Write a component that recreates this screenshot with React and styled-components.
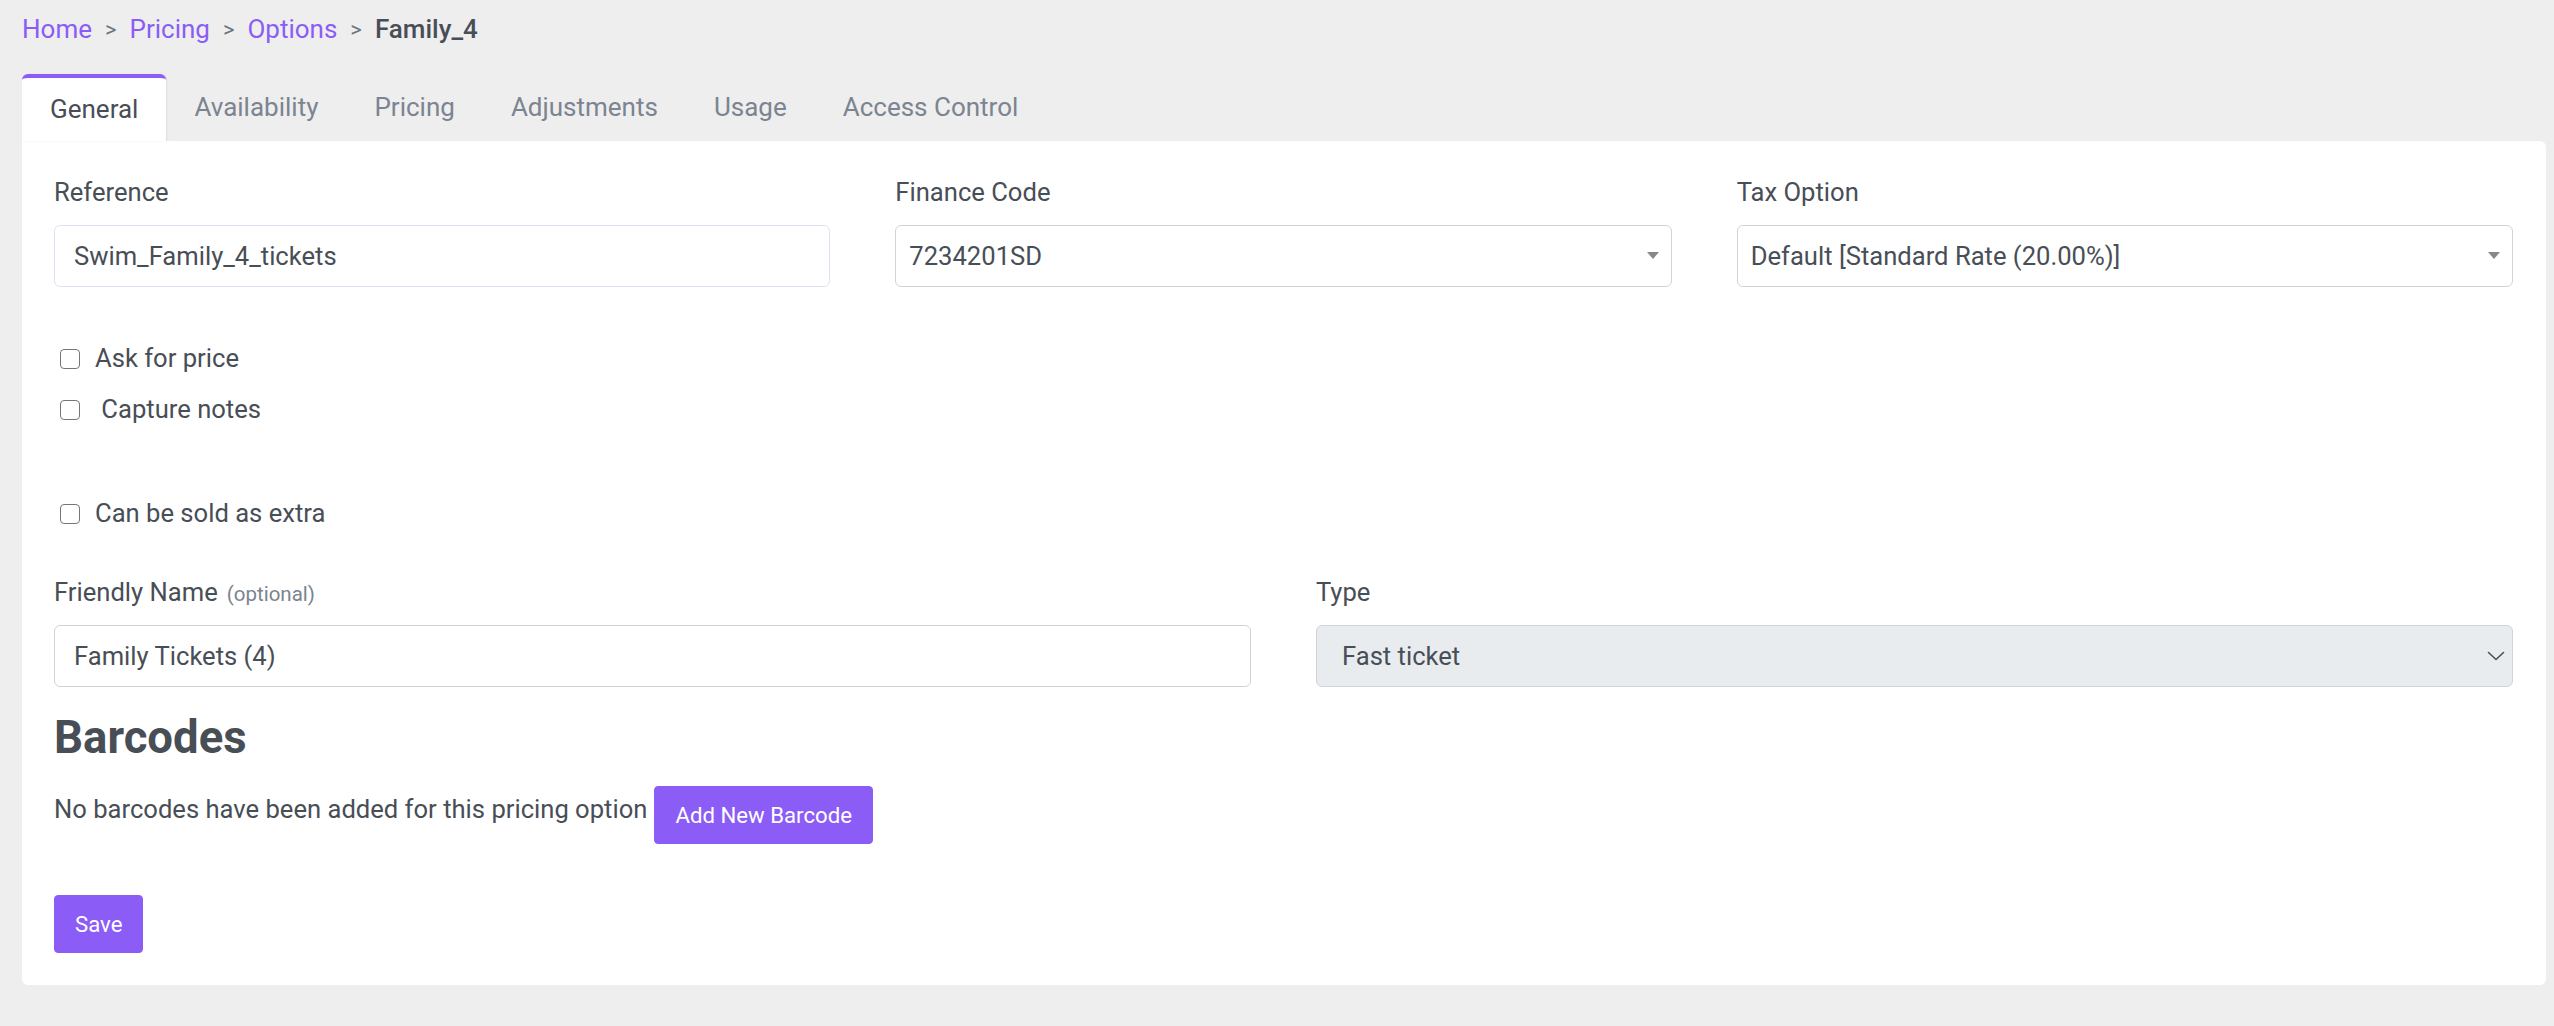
import React from "react";
import styled, { createGlobalStyle } from "styled-components";

const GlobalStyle = createGlobalStyle`
  html, body {
    margin: 0;
    padding: 0;
    background: #eeeeee;
  }
  body {
    font-family: Roboto, "Liberation Sans", Arial, sans-serif;
    font-size: 25.6px;
    line-height: 1.5;
    color: #495057;
  }
  * { box-sizing: border-box; }
`;

const Page = styled.div`
  padding: 10px 8px 41px 22px;
  min-height: 1026px;
`;

const Breadcrumb = styled.nav`
  display: flex;
  align-items: center;
  height: 39px;
  margin-bottom: 25px;
  font-size: 26px;
`;

const Crumb = styled.a`
  color: ${(p) => (p.$current ? "#484e56" : "#8b5cf6")};
  font-weight: ${(p) => (p.$current ? 500 : 400)};
  text-decoration: none;
`;

const Sep = styled.span`
  color: #6c757d;
  padding: 0 13px;
  font-size: 22px;
`;

const Tabs = styled.div`
  display: flex;
  align-items: stretch;
  height: 67px;
  font-size: 26px;
`;

const Tab = styled.div`
  display: flex;
  align-items: center;
  padding: 0 28px;
  color: ${(p) => (p.$active ? "#484e56" : "#7b8490")};
  background: ${(p) => (p.$active ? "#ffffff" : "transparent")};
  border-top: ${(p) => (p.$active ? "4px solid #8b5cf6" : "none")};
  border-radius: 6px 6px 0 0;
  box-shadow: ${(p) => (p.$active ? "1px 0 2px rgba(0,0,0,0.08)" : "none")};
  cursor: pointer;
`;

const Panel = styled.section`
  background: #ffffff;
  border-radius: 0 6px 6px 6px;
  padding: 32px 33px 32px 32px;
`;

const Grid = styled.div`
  display: grid;
  grid-template-columns: repeat(${(p) => p.$cols}, 1fr);
  column-gap: 65px;
`;

const Field = styled.div`
  display: flex;
  flex-direction: column;
`;

const Label = styled.label`
  display: block;
  height: 39px;
  line-height: 39px;
  margin-bottom: 13px;
  color: #484e56;
`;

const Optional = styled.small`
  font-size: 20.5px;
  color: #7b8490;
  margin-left: 9px;
`;

const TextInput = styled.input`
  height: 62px;
  width: 100%;
  padding: 0 19px;
  font: inherit;
  color: #484e56;
  border: 1px solid ${(p) => (p.$tint ? "#dde2f4" : "#ced4da")};
  border-radius: 6px;
  background: #fff;
  outline: none;
`;

const SelectBox = styled.div`
  position: relative;
  height: 62px;
  display: flex;
  align-items: center;
  padding: 0 40px 0 ${(p) => (p.$native ? "25px" : "13px")};
  border: 1px solid #ced4da;
  border-radius: 6px;
  background: ${(p) => (p.$disabled ? "#e9ecef" : "#ffffff")};
  color: #484e56;
`;

const Caret = styled.span`
  position: absolute;
  right: 12px;
  top: 50%;
  margin-top: -4px;
  width: 0;
  height: 0;
  border-left: 6px solid transparent;
  border-right: 6px solid transparent;
  border-top: 7px solid #888888;
`;

const Chevron = styled.svg`
  position: absolute;
  right: 7px;
  top: 50%;
  margin-top: -6px;
`;

const CheckList = styled.div`
  display: flex;
  flex-direction: column;
  margin-top: 52px;
`;

const CheckRow = styled.label`
  display: flex;
  align-items: center;
  height: 39px;
  margin-top: ${(p) => p.$gap || 0}px;
  padding-left: 6px;
  color: #484e56;
`;

const Box = styled.input.attrs({ type: "checkbox" })`
  appearance: none;
  -webkit-appearance: none;
  width: 20px;
  height: 20px;
  margin: 0 15px 0 0;
  border: 1.5px solid #767676;
  border-radius: 4px;
  background: #fff;
`;

const SecondRow = styled(Grid)`
  margin-top: 40px;
`;

const Heading = styled.h3`
  font-size: 45.5px;
  line-height: 1.2;
  font-weight: 700;
  color: #484e56;
  margin: 24px 0 20px;
`;

const Note = styled.div`
  display: flex;
  align-items: flex-start;
  gap: 7px;
  color: #484e56;
`;

const NoteText = styled.span`
  line-height: 39px;
  margin-top: 4px;
`;

const Button = styled.button`
  font-family: inherit;
  font-size: 22.2px;
  line-height: 34px;
  padding: 11px 20px;
  border: 1px solid #8b5cf6;
  border-radius: 4px;
  background: #8b5cf6;
  color: #ffffff;
  cursor: pointer;
`;

const Actions = styled.div`
  margin-top: 51px;
`;

const tabs = ["General", "Availability", "Pricing", "Adjustments", "Usage", "Access Control"];

export default function App() {
  return (
    <>
      <GlobalStyle />
      <Page>
        <Breadcrumb>
          <Crumb href="#">Home</Crumb>
          <Sep>&gt;</Sep>
          <Crumb href="#">Pricing</Crumb>
          <Sep>&gt;</Sep>
          <Crumb href="#">Options</Crumb>
          <Sep>&gt;</Sep>
          <Crumb as="span" $current>Family_4</Crumb>
        </Breadcrumb>

        <Tabs>
          {tabs.map((t, i) => (
            <Tab key={t} $active={i === 0}>{t}</Tab>
          ))}
        </Tabs>

        <Panel>
          <Grid $cols={3}>
            <Field>
              <Label>Reference</Label>
              <TextInput $tint defaultValue="Swim_Family_4_tickets" />
            </Field>
            <Field>
              <Label>Finance Code</Label>
              <SelectBox>
                7234201SD
                <Caret />
              </SelectBox>
            </Field>
            <Field>
              <Label>Tax Option</Label>
              <SelectBox>
                Default [Standard Rate (20.00%)]
                <Caret />
              </SelectBox>
            </Field>
          </Grid>

          <CheckList>
            <CheckRow>
              <Box />
              Ask for price
            </CheckRow>
            <CheckRow $gap={12}>
              <Box />
              &nbsp;Capture notes
            </CheckRow>
            <CheckRow $gap={65}>
              <Box />
              Can be sold as extra
            </CheckRow>
          </CheckList>

          <SecondRow $cols={2}>
            <Field>
              <Label>
                Friendly Name<Optional>(optional)</Optional>
              </Label>
              <TextInput defaultValue="Family Tickets (4)" />
            </Field>
            <Field>
              <Label>Type</Label>
              <SelectBox $native $disabled>
                Fast ticket
                <Chevron width="18" height="12" viewBox="0 0 18 12" fill="none">
                  <path d="M1.5 2.5 L9 9.5 L16.5 2.5" stroke="#495057" strokeWidth="1.6" strokeLinecap="round" strokeLinejoin="round" />
                </Chevron>
              </SelectBox>
            </Field>
          </SecondRow>

          <Heading>Barcodes</Heading>
          <Note>
            <NoteText>No barcodes have been added for this pricing option</NoteText>
            <Button>Add New Barcode</Button>
          </Note>

          <Actions>
            <Button>Save</Button>
          </Actions>
        </Panel>
      </Page>
    </>
  );
}
